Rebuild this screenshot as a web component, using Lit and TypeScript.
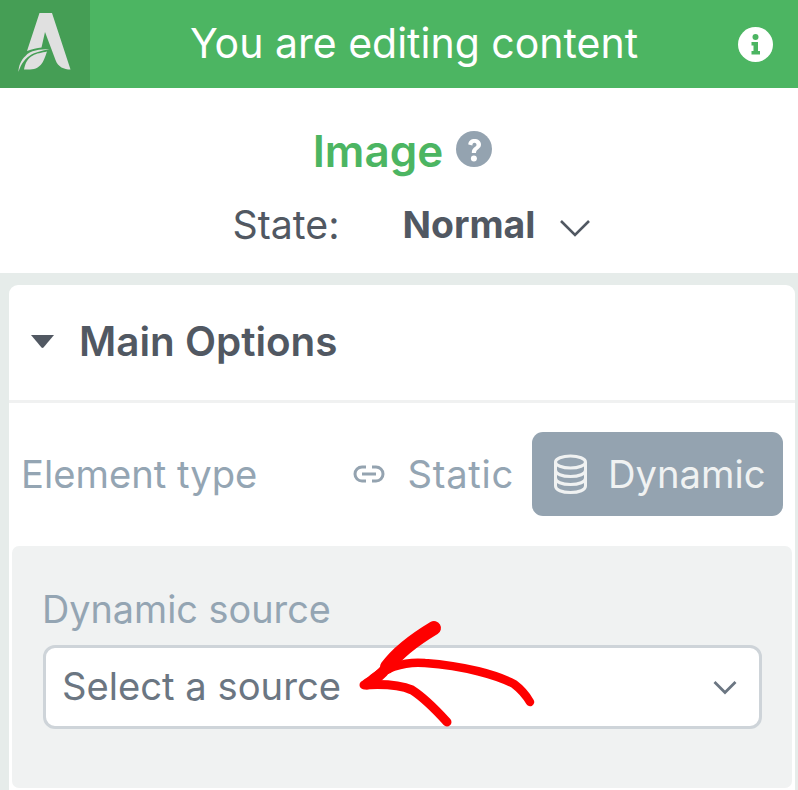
import { LitElement, html, css } from "lit";
import { customElement } from "lit/decorators.js";

@customElement("app-root")
export class AppRoot extends LitElement {
  static styles = css`
    :host { display: block; position: relative; width: 798px; height: 790px; overflow: hidden; background: #e6ecea; font-family: Inter, "Liberation Sans", sans-serif; color: #515862; }
    .bar { display: flex; align-items: center; height: 88px; background: #4cb562; }
    .logo { width: 90px; height: 88px; background: #459e55; flex: none; }
    .logo svg { display: block; }
    .bar-title { flex: 1; text-align: center; color: #fff; font-size: 41px; font-weight: 400; margin-top: -2px; }
    .bar-info { width: 35px; height: 35px; margin-right: 25px; flex: none; }
    .top { height: 185px; background: #fff; display: flex; flex-direction: column; align-items: center; }
    .name { display: flex; align-items: center; gap: 13px; margin-top: 38px; margin-left: 7px; height: 50px; }
    .name span { color: #4cb562; font-size: 44px; font-weight: 600; }
    .name svg { width: 36px; height: 36px; margin-top: -4px; }
    .state { display: flex; align-items: center; height: 50px; margin-top: 23px; font-size: 39.3px; margin-left: 26px; }
    .state .l { width: 170px; }
    .state .v { font-weight: 700; font-size: 37.4px; }
    .state svg { width: 32px; height: 20px; margin-left: 24px; margin-top: 8px; }
    .strip { height: 12px; }
    .panel { margin: 0 3px 0 9px; background: #fff; border-radius: 9px 9px 0 0; height: 505px; }
    .phead { height: 115px; display: flex; align-items: center; border-bottom: 3px solid #f0f1f1; padding-left: 21px; gap: 24px; }
    .phead svg { width: 25px; height: 14px; margin-top: -4px; }
    .phead span { font-size: 40.4px; font-weight: 600; color: #515862; margin-top: -3px; }
    .row { display: flex; align-items: center; margin-top: 29px; height: 84px; padding-left: 12px; padding-right: 12px; }
    .row .lab { flex: 1; color: #94a5b3; font-size: 38.2px; }
    .tab { display: flex; align-items: center; color: #94a5b3; font-size: 38.2px; }
    .tab.static { gap: 23px; margin-right: 18px; }
    .tab.static span { letter-spacing: 0.7px; }
    .tab.static svg { width: 32px; height: 18px; }
    .tab.dyn { background: #94a3b0; color: #f0f2f2; border-radius: 11px; height: 84px; width: 251px; box-sizing: border-box; padding-left: 20px; gap: 19px; }
    .tab.dyn svg { width: 37px; height: 40px; }
    .sub { margin: 30px 3px 0 3px; background: #f0f2f2; border-radius: 7px; height: 242px; box-sizing: border-box; padding: 43px 30px 0 31px; }
    .sub label { display: block; color: #94a5b3; font-size: 37.8px; line-height: 42px; margin-left: -1px; margin-top: -1px; }
    .select { margin-top: 15px; height: 84px; box-sizing: border-box; border: 3px solid #ced4d9; border-radius: 12px; background: #fff; display: flex; align-items: center; justify-content: space-between; padding: 0 22px 0 17px; color: #6b7682; font-size: 38.2px; }
    .select span { margin-left: -1px; margin-top: -2px; }
    .select svg { width: 24px; height: 15px; }
    .arrow { position: absolute; left: 0; top: 0; width: 798px; height: 790px; pointer-events: none; }
  `;

  render() {
    return html`
      <div class="bar">
        <div class="logo">
          <svg width="90" height="88" viewBox="0 0 90 88" fill="#e0e0e0">
            <path d="M39.500 13H52L70.500 69.500C64 69.500 58 67 55.500 60L45 32L41.500 47.500C37 48 32 49 27 51Z"/>
            <path d="M49.500 49C40 49.500 30 50 25.500 56C21 60 18.500 66 18.500 72C20 67 23 60 30 55.500C35 52 42 51 49.500 49Z"/>
            <path d="M47 51.500C44 60 42 69 30 69.500L24 69.500C25 63 28 58 33 55.500C36 53.500 42 52.500 47 51.500Z"/>
          </svg>
        </div>
        <div class="bar-title">You are editing content</div>
        <svg class="bar-info" viewBox="0 0 35 35">
          <circle cx="17.500" cy="17.500" r="17.500" fill="#fff"/>
          <circle cx="17.500" cy="10" r="3" fill="#4cb562"/>
          <path d="M13.500 15H20V24H22V27.500H13.500V24H15.500V18.500H13.500Z" fill="#4cb562"/>
        </svg>
      </div>
      <div class="top">
        <div class="name">
          <span>Image</span>
          <svg viewBox="0 0 36 36">
            <circle cx="18" cy="18" r="18" fill="#94a3b0"/>
            <path d="M12.300 13.500C12.300 10 15 8 18.500 8C22 8 25 10 25 13.500C25 18 20 18 20 22H15.800C15.800 16 20.500 16.500 20.500 13.800C20.500 12.500 19.500 11.800 18.500 11.800C17 11.800 16.400 12.700 16.400 14.500Z" fill="#fff"/>
            <circle cx="17.900" cy="27.500" r="3" fill="#fff"/>
          </svg>
        </div>
        <div class="state">
          <span class="l">State:</span>
          <span class="v">Normal</span>
          <svg viewBox="0 0 32 20"><path d="M2 3L16 17L30 3" fill="none" stroke="#515862" stroke-width="2.600"/></svg>
        </div>
      </div>
      <div class="strip"></div>
      <div class="panel">
        <div class="phead">
          <svg viewBox="0 0 25 14"><path d="M1 1H24L13.500 13.500a1.500 1.500 0 0 1-2 0Z" fill="#515862"/></svg>
          <span>Main Options</span>
        </div>
        <div class="row">
          <div class="lab">Element type</div>
          <div class="tab static">
            <svg viewBox="0 0 32 18" fill="none" stroke="#94a3b0" stroke-width="3">
              <path d="M13 2H9a7 7 0 0 0 0 14h4M19 2h4a7 7 0 0 1 0 14h-4M9 9H23"/>
            </svg>
            <span>Static</span>
          </div>
          <div class="tab dyn">
            <svg viewBox="0 0 37 40" fill="none" stroke="#f0f2f2" stroke-width="3">
              <ellipse cx="18.500" cy="8" rx="15" ry="6"/>
              <path d="M3.500 8V32C3.500 36 10 38.500 18.500 38.500S33.500 36 33.500 32V8"/>
              <path d="M3.500 16C3.500 20 10 22.500 18.500 22.500S33.500 20 33.500 16"/>
              <path d="M3.500 24C3.500 28 10 30.500 18.500 30.500S33.500 28 33.500 24"/>
            </svg>
            <span>Dynamic</span>
          </div>
        </div>
        <div class="sub">
          <label>Dynamic source</label>
          <div class="select">
            <span>Select a source</span>
            <svg viewBox="0 0 24 15"><path d="M1.500 2L12 12.500L22.500 2" fill="none" stroke="#6b7682" stroke-width="2.800"/></svg>
          </div>
        </div>
      </div>
      <svg class="arrow" viewBox="0 0 798 790" fill="none" stroke="#fe0000" stroke-linecap="round" stroke-linejoin="round">
        <path d="M434 628C414 640 398 652 387 667" stroke-width="14"/>
        <path d="M387 667C381 675 376 679 367 684" stroke-width="11"/>
        <path d="M367 684C381 668 405 661 425 663C465 666 497 675 514 684C522 690 526 695 530 702" stroke-width="8.500"/>
        <path d="M364 685C380 684 398 684 412 690C426 699 437 711 447 722" stroke-width="9"/>
      </svg>
    `;
  }
}
